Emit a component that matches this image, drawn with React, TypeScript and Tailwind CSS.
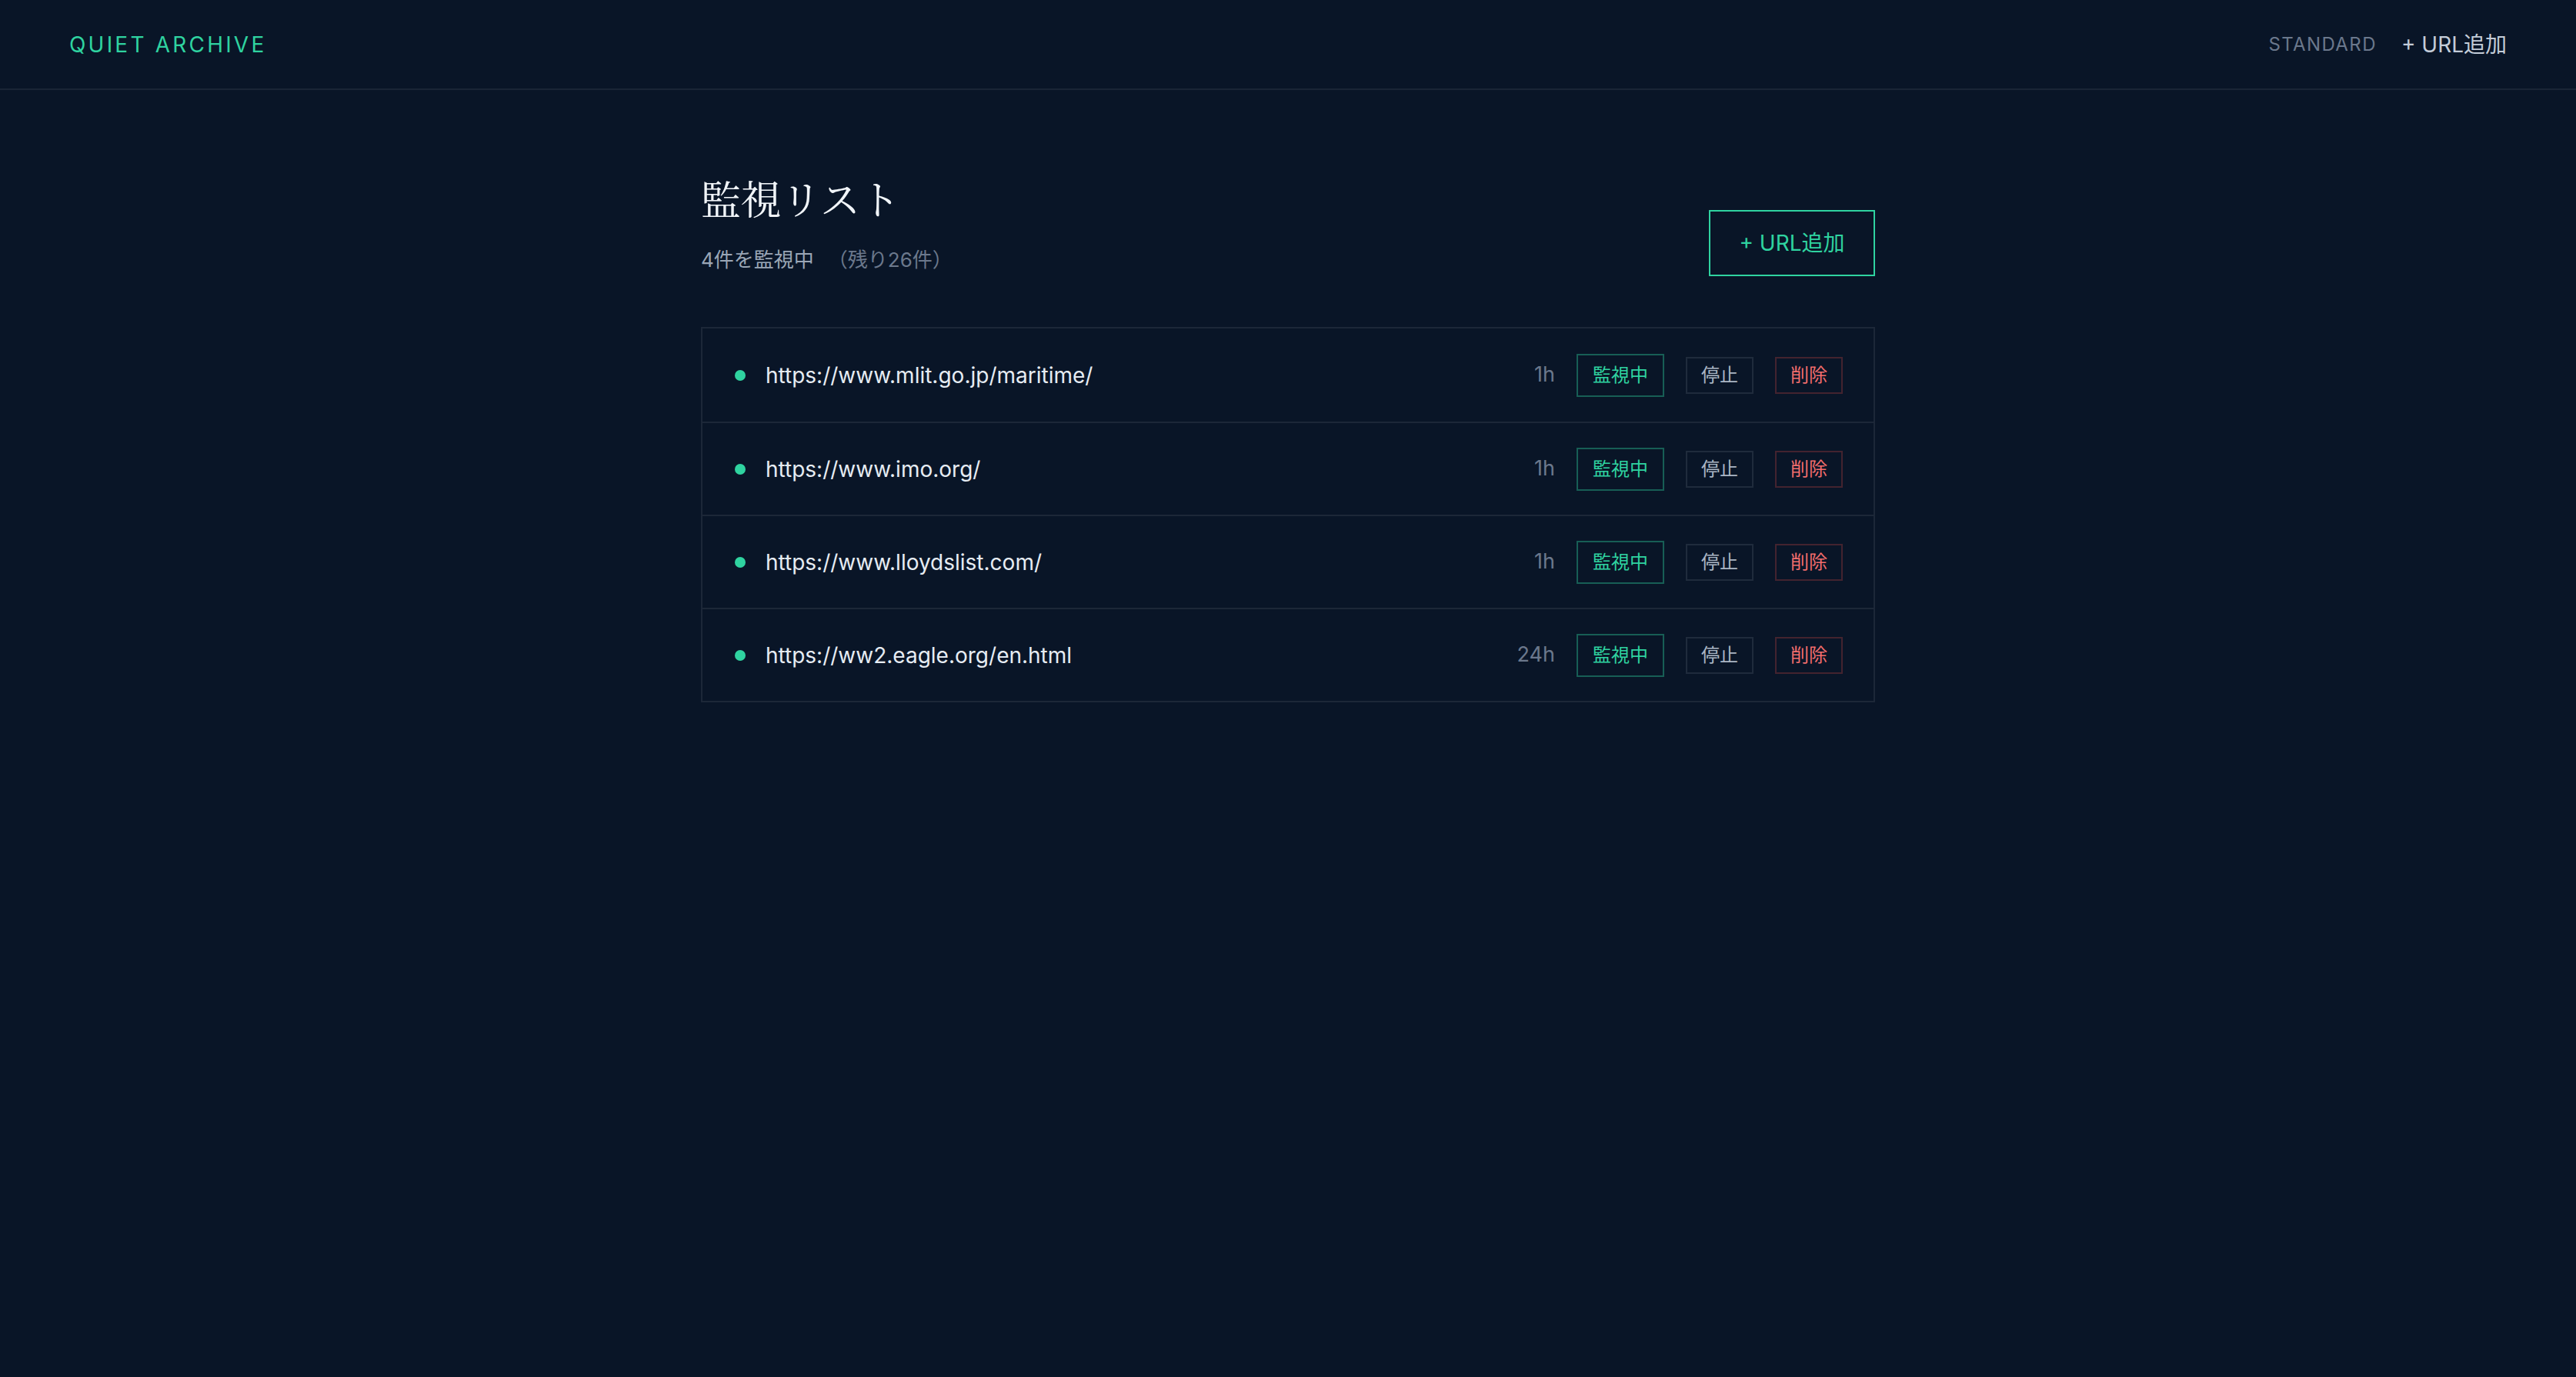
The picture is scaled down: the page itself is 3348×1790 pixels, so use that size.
import { useState } from "react";

type Watch = { url: string; interval: string };

const initial: Watch[] = [
  { url: "https://www.mlit.go.jp/maritime/", interval: "1h" },
  { url: "https://www.imo.org/", interval: "1h" },
  { url: "https://www.lloydslist.com/", interval: "1h" },
  { url: "https://ww2.eagle.org/en.html", interval: "24h" },
];

const sans = "font-['Inter','Noto_Sans_CJK_JP',sans-serif]";

function WatchRow({ item, onDelete }: { item: Watch; onDelete: () => void }) {
  return (
    <div className="flex h-[121px] items-center border-t-2 border-[#1c2738] pl-[42px] pr-[40px] first:border-t-0">
      <span className="h-[14px] w-[14px] shrink-0 rounded-full bg-[#2fd3a0]" />
      <span className="ml-[26px] flex-1 truncate text-[28px] text-[#e6ecf3]">{item.url}</span>
      <span className="text-[27px] text-[#6b788c]">{item.interval}</span>
      <button
        type="button"
        className="ml-[28px] h-[56px] w-[114px] border-2 border-[#175e55] text-[24px] text-[#2fd3a0]"
      >
        監視中
      </button>
      <button
        type="button"
        className="ml-[28px] h-[48px] w-[88px] border-2 border-[#1f2b3c] text-[24px] text-[#aab5c4]"
      >
        停止
      </button>
      <button
        type="button"
        className="ml-[28px] h-[48px] w-[88px] border-2 border-[#43232f] text-[24px] text-[#f26d6d]"
        onClick={onDelete}
      >
        削除
      </button>
    </div>
  );
}

export default function App() {
  const [items, setItems] = useState(initial);

  return (
    <div className={`min-h-screen bg-[#091527] ${sans}`}>
      <header className="flex h-[117px] items-center justify-between border-b-2 border-[#1a2536] px-[90px]">
        <div className="text-[28px] tracking-[3.2px] text-[#2fd3a0]">QUIET ARCHIVE</div>
        <div className="flex items-center gap-[32px]">
          <span className="text-[24px] tracking-[1.4px] text-[#6b788c]">STANDARD</span>
          <button type="button" className="text-[28px] text-[#c3ccd8]">
            + URL追加
          </button>
        </div>
      </header>

      <main className="mx-auto w-[1526px] pt-[107px]">
        <div className="mb-[68px] flex items-end justify-between">
          <div>
            <h1 className="font-['Noto_Serif_CJK_JP','Liberation_Serif',serif] text-[52px] leading-[1.25] text-[#f1f5f9]">
              監視リスト
            </h1>
            <p className="mt-[29px] text-[26px] leading-[1.5] text-[#9aa6b6]">
              {items.length}件を監視中
              <span className="ml-[18px] text-[#6b788c]">（残り{30 - items.length}件）</span>
            </p>
          </div>
          <button
            type="button"
            className="mb-[-2px] h-[86px] w-[216px] border-2 border-[#2fd3a0] text-[28px] text-[#2fd3a0]"
          >
            + URL追加
          </button>
        </div>

        <div className="border-2 border-[#1c2738]">
          {items.map((item, i) => (
            <WatchRow
              key={item.url}
              item={item}
              onDelete={() => setItems(items.filter((_, j) => j !== i))}
            />
          ))}
        </div>
      </main>
    </div>
  );
}
